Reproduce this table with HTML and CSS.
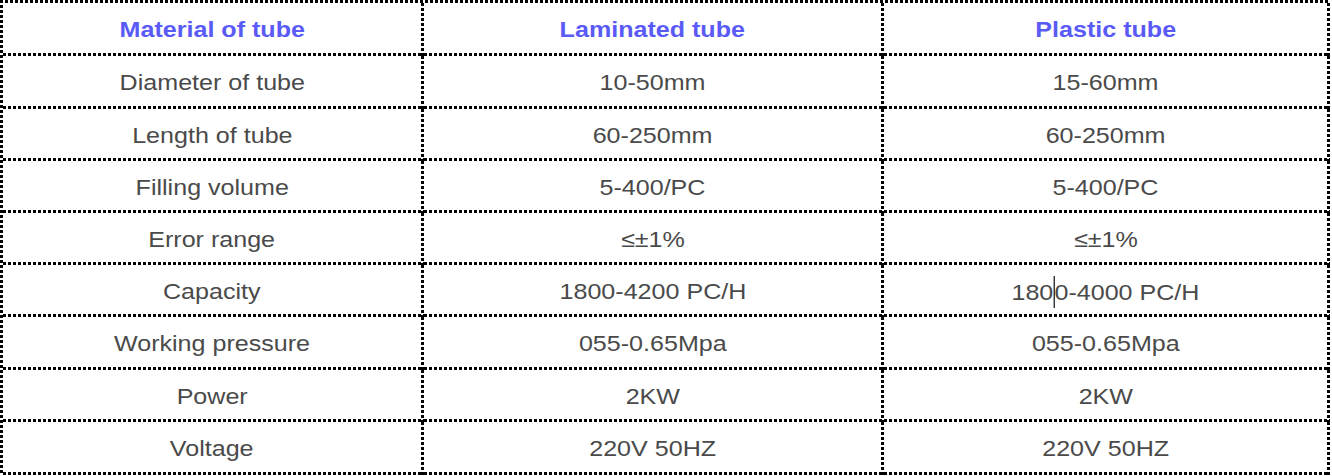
FILE: index.html
```html
<!DOCTYPE html>
<html>
<head>
<meta charset="utf-8">
<link rel="stylesheet" href="styles.css">
</head>
<body>
<table class="spec">
  <colgroup>
    <col class="c1"><col class="c2"><col class="c3">
  </colgroup>
  <tr class="head r53">
    <th><span class="t">Material of tube</span></th>
    <th><span class="t">Laminated tube</span></th>
    <th><span class="t">Plastic tube</span></th>
  </tr>
  <tr class="r53"><td><span class="t">Diameter of tube</span></td><td><span class="t">10-50mm</span></td><td><span class="t">15-60mm</span></td></tr>
  <tr class="r52"><td><span class="t">Length of tube</span></td><td><span class="t">60-250mm</span></td><td><span class="t">60-250mm</span></td></tr>
  <tr class="r52"><td><span class="t">Filling volume</span></td><td><span class="t">5-400/PC</span></td><td><span class="t">5-400/PC</span></td></tr>
  <tr class="r52"><td><span class="t">Error range</span></td><td><span class="t">≤±1%</span></td><td><span class="t">≤±1%</span></td></tr>
  <tr class="r52"><td><span class="t">Capacity</span></td><td><span class="t">1800-4200 PC/H</span></td><td><span class="t">180<span class="caret"></span>0-4000 PC/H</span></td></tr>
  <tr class="r53"><td><span class="t">Working pressure</span></td><td><span class="t">055-0.65Mpa</span></td><td><span class="t">055-0.65Mpa</span></td></tr>
  <tr class="r52"><td><span class="t">Power</span></td><td><span class="t">2KW</span></td><td><span class="t">2KW</span></td></tr>
  <tr class="r53"><td><span class="t">Voltage</span></td><td><span class="t">220V 50HZ</span></td><td><span class="t">220V 50HZ</span></td></tr>
</table>
</body>
</html>
```
FILE: styles.css
```css
html, body {
  margin: 0;
  padding: 0;
  background: #fff;
}
.spec {
  border-collapse: separate;
  border-spacing: 0;
  width: 1330px;
  margin: 0;
  padding: 3px 0 0 3px;
  font-family: "Liberation Sans", Arial, sans-serif;
  font-size: 22px;
  color: #4a4a4a;
  table-layout: fixed;
  background:
    repeating-linear-gradient(90deg, #000 0 3px, transparent 3px 5px) top left / 100% 3px no-repeat,
    repeating-linear-gradient(180deg, #000 0 3px, transparent 3px 5px) top left / 3px 100% no-repeat;
}
.c1 { width: 421px; }
.c2 { width: 460px; }
.c3 { width: 446px; }
.spec th, .spec td {
  text-align: center;
  vertical-align: middle;
  padding: 4px 3px 3px 0;
  box-sizing: border-box;
  background:
    repeating-linear-gradient(90deg, #000 0 3px, transparent 3px 5px) bottom left / 100% 3px no-repeat,
    repeating-linear-gradient(180deg, #000 0 3px, transparent 3px 5px) top right / 3px 100% no-repeat;
}
.r53 > * { height: 53px; }
.r52 > * { height: 52px; }
.head > th { height: 53px; }
.spec th {
  color: #5a5af7;
  font-weight: bold;
}
.t {
  display: inline-block;
  transform: scaleX(1.14);
  white-space: nowrap;
}
.caret {
  display: inline-block;
  width: 0;
  height: 32px;
  border-left: 1px solid #000;
  vertical-align: -8px;
}
```
